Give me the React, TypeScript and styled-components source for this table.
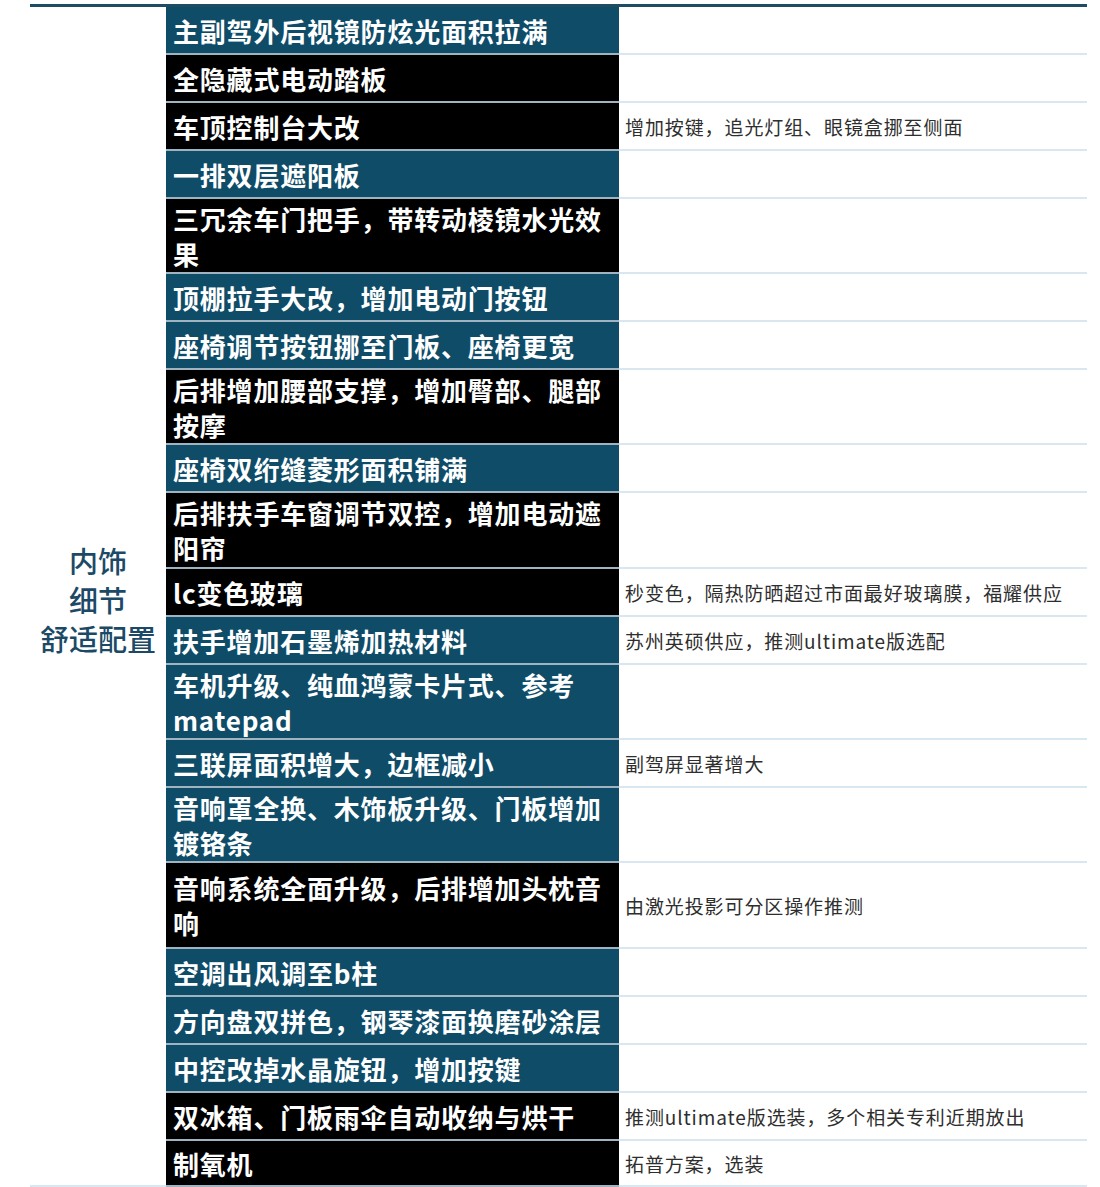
import React from "react";
import styled, { createGlobalStyle } from "styled-components";

interface Row {
  item: string;
  note?: string;
  dark?: boolean;
  height: number;
}

const rows: Row[] = [
  { item: "主副驾外后视镜防炫光面积拉满", height: 48 },
  { item: "全隐藏式电动踏板", dark: true, height: 48 },
  { item: "车顶控制台大改", dark: true, note: "增加按键，追光灯组、眼镜盒挪至侧面", height: 48 },
  { item: "一排双层遮阳板", height: 48 },
  { item: "三冗余车门把手，带转动棱镜水光效果", dark: true, height: 75 },
  { item: "顶棚拉手大改，增加电动门按钮", height: 48 },
  { item: "座椅调节按钮挪至门板、座椅更宽", height: 48 },
  { item: "后排增加腰部支撑，增加臀部、腿部按摩", dark: true, height: 75 },
  { item: "座椅双绗缝菱形面积铺满", height: 48 },
  { item: "后排扶手车窗调节双控，增加电动遮阳帘", dark: true, height: 76 },
  { item: "lc变色玻璃", dark: true, note: "秒变色，隔热防晒超过市面最好玻璃膜，福耀供应", height: 48 },
  { item: "扶手增加石墨烯加热材料", note: "苏州英硕供应，推测ultimate版选配", height: 48 },
  { item: "车机升级、纯血鸿蒙卡片式、参考matepad", height: 75 },
  { item: "三联屏面积增大，边框减小", note: "副驾屏显著增大", height: 48 },
  { item: "音响罩全换、木饰板升级、门板增加镀铬条", height: 75 },
  { item: "音响系统全面升级，后排增加头枕音响", dark: true, note: "由激光投影可分区操作推测", height: 86 },
  { item: "空调出风调至b柱", height: 48 },
  { item: "方向盘双拼色，钢琴漆面换磨砂涂层", height: 48 },
  { item: "中控改掉水晶旋钮，增加按键", height: 48 },
  { item: "双冰箱、门板雨伞自动收纳与烘干", dark: true, note: "推测ultimate版选装，多个相关专利近期放出", height: 48 },
  { item: "制氧机", dark: true, note: "拓普方案，选装", height: 46 },
];

const GlobalStyle = createGlobalStyle`
  body {
    margin: 0;
    background: #ffffff;
    font-family: "Noto Sans CJK SC", "Noto Sans", sans-serif;
  }
`;

const Page = styled.div`
  padding: 4px 13px 0 30px;
`;

const Table = styled.div`
  display: grid;
  grid-template-columns: 136px 453px 468px;
  border-top: 3px solid #1e4c62;
`;

const Label = styled.div<{ span: number }>`
  grid-column: 1;
  grid-row: 1 / span ${(p) => p.span};
  display: flex;
  align-items: center;
  justify-content: center;
  text-align: center;
  border-bottom: 2px solid #d9e8f0;
  color: #1c4a66;
  font-size: 29px;
  font-weight: 500;
  line-height: 39px;
  padding-top: 6px;
  box-sizing: border-box;
`;

const Item = styled.div<{ dark?: boolean; h: number }>`
  grid-column: 2;
  height: ${(p) => p.h}px;
  box-sizing: border-box;
  display: flex;
  align-items: center;
  padding: 0 6px 0 7px;
  background: ${(p) => (p.dark ? "#000000" : "#0f4c68")};
  border-bottom: 2px solid #9fb4c0;
  color: #ffffff;
  font-size: 26px;
  font-weight: 700;
  letter-spacing: 0.8px;
  line-height: 35px;
`;

const Note = styled.div<{ h: number }>`
  grid-column: 3;
  height: ${(p) => p.h}px;
  box-sizing: border-box;
  display: flex;
  align-items: center;
  padding: 0 6px;
  border-bottom: 2px solid #d9e8f0;
  color: #2e2e2e;
  font-size: 19px;
  font-weight: 400;
  letter-spacing: 0.9px;
`;

export default function App() {
  return (
    <>
      <GlobalStyle />
      <Page>
        <Table>
          <Label span={rows.length}>
            内饰
            <br />
            细节
            <br />
            舒适配置
          </Label>
          {rows.map((r, i) => (
            <React.Fragment key={i}>
              <Item dark={r.dark} h={r.height}>
                {r.item}
              </Item>
              <Note h={r.height}>{r.note}</Note>
            </React.Fragment>
          ))}
        </Table>
      </Page>
    </>
  );
}
